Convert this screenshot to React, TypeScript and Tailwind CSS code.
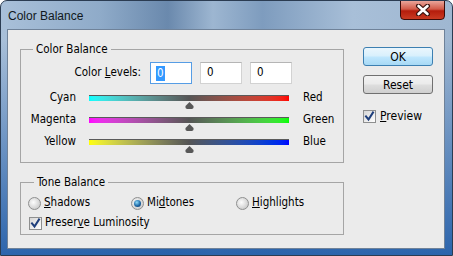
import React from "react";

const ui = "font-['DejaVu_Sans_Condensed','Liberation_Sans',sans-serif] text-[11.5px] text-black";

const Check = () => (
  <span className="w-[13px] h-[13px] border border-[#8e8f8f] bg-gradient-to-br from-[#d6d6d6] to-white flex items-center justify-center">
    <svg width="11" height="11" viewBox="0 0 11 11">
      <path d="M2 5.5 L4.5 8.5 L9 1.5" fill="none" stroke="#1f3f7c" strokeWidth="2" strokeLinecap="square" />
    </svg>
  </span>
);

const Radio = ({ on }: { on?: boolean }) => (
  <span className="w-[13px] h-[13px] rounded-full border border-[#8e8f8f] bg-[radial-gradient(circle_at_40%_40%,#fdfdfd,#d0d0d0_70%,#b8b8b8)] flex items-center justify-center">
    {on && (
      <span className="w-[7px] h-[7px] rounded-full bg-[radial-gradient(circle_at_40%_35%,#8fdcfb,#1d68a6_55%,#0b2f5c)]" />
    )}
  </span>
);

const Slider = ({ left, right, grad }: { left: string; right: string; grad: string }) => (
  <div className="flex items-center h-[22px]">
    <span className="w-[55px] text-right">{left}</span>
    <div className={`ml-[13px] w-[200px] h-[6px] relative border-t border-[#5a5a5a] ${grad}`}>
      <svg className="absolute top-[6px] left-[96px]" width="9" height="7" viewBox="0 0 9 7">
        <path d="M4.5 0 L8.5 4 Q9 7 6.5 7 L2.5 7 Q0 7 0.5 4 Z" fill="#585858" />
      </svg>
    </div>
    <span className="ml-[14px]">{right}</span>
  </div>
);

const Field = ({ focus }: { focus?: boolean }) => (
  <div
    className={`w-[42px] h-[22px] bg-white border flex items-center pl-[5px] ${
      focus ? "border-[#569de5]" : "border-[#d2d2d2] border-t-[#b5b5b5]"
    }`}
  >
    {focus ? <span className="bg-[#3399ff] text-white leading-[15px] px-px">0</span> : <span className="px-px">0</span>}
  </div>
);

export default function App() {
  return (
    <div className={`w-[453px] h-[256px] flex flex-col rounded-t-[7px] border border-[#2b3c52] overflow-hidden bg-[linear-gradient(180deg,rgba(38,96,170,0)_15%,rgba(38,96,170,0.95)_100%),linear-gradient(90deg,#a9c0d9_0%,#8fabc9_22%,#6a89ad_37%,#9db6d1_47%,#7e9cbe_58%,#a8bfd8_78%,#9fb7d1_100%)] ${ui}`}>
      <div className="h-[28px] flex justify-between shrink-0">
        <span className="ml-[7px] mt-[6px] text-[12px] font-['Liberation_Sans',sans-serif] text-[#101820]">Color Balance</span>
        <div className="-mt-px mr-[7px] w-[45px] h-[20px] rounded-b-[4px] border border-[#3b0b08] bg-[linear-gradient(180deg,#e9a59a_0%,#d25a48_45%,#b41d0c_55%,#c93a22_100%)] flex items-center justify-center">
          <svg width="16" height="12" viewBox="0 0 16 12">
            <path d="M3.5 2 L12.5 10 M12.5 2 L3.5 10" stroke="#3a1410" strokeWidth="5" strokeLinecap="round" />
            <path d="M3.5 2 L12.5 10 M12.5 2 L3.5 10" stroke="#ffffff" strokeWidth="2.6" strokeLinecap="round" />
          </svg>
        </div>
      </div>

      <div className="ml-[6px] mr-[7px] mb-[6px] flex-1 bg-[#ebebeb] border border-[#6f8299] flex pl-[12px]">
        <div className="w-[324px] flex flex-col pt-[12px]">
          <fieldset className="border border-[#a5a5a5] pb-[9px]">
            <legend className="ml-[12px] px-[3px] leading-[14px]">Color Balance</legend>
            <div className="mt-[6px] h-[22px] flex items-center">
              <span className="w-[120px] text-right">
                Color <u>L</u>evels:
              </span>
              <div className="ml-[9px] flex gap-[8px]">
                <Field focus />
                <Field />
                <Field />
              </div>
            </div>
            <div className="mt-[3px]">
              <Slider left="Cyan" right="Red" grad="bg-gradient-to-r from-[#00ffff] via-[#555555] to-[#ff0000]" />
              <Slider left="Magenta" right="Green" grad="bg-gradient-to-r from-[#ff00ff] via-[#555555] to-[#00ff00]" />
              <Slider left="Yellow" right="Blue" grad="bg-gradient-to-r from-[#ffff00] via-[#555555] to-[#0000ff]" />
            </div>
          </fieldset>

          <fieldset className="mt-[12px] border border-[#a5a5a5] pb-[2px]">
            <legend className="ml-[13px] px-[3px] leading-[14px]">Tone Balance</legend>
            <div className="mt-[5px] h-[18px] flex items-center pl-[7px]">
              <div className="w-[103px] flex items-center gap-[3px]">
                <Radio />
                <span>
                  <u>S</u>hadows
                </span>
              </div>
              <div className="w-[105px] flex items-center gap-[3px]">
                <Radio on />
                <span>
                  Mi<u>d</u>tones
                </span>
              </div>
              <div className="flex items-center gap-[3px]">
                <Radio />
                <span>
                  <u>H</u>ighlights
                </span>
              </div>
            </div>
            <div className="mt-[2px] h-[18px] flex items-center gap-[3px] pl-[8px]">
              <Check />
              <span>
                Preser<u>v</u>e Luminosity
              </span>
            </div>
          </fieldset>
        </div>

        <div className="ml-[19px] w-[70px] flex flex-col pt-[17px]">
          <button className="h-[19px] rounded-[3px] border border-[#3c7fb1] bg-[linear-gradient(180deg,#eaf6fd_0%,#d9f0fc_45%,#bee6fd_55%,#a7d9f5_100%)] text-[12px] leading-none">
            OK
          </button>
          <button className="mt-[9px] h-[19px] rounded-[3px] border border-[#707070] bg-[linear-gradient(180deg,#f2f2f2_0%,#ebebeb_45%,#dddddd_55%,#cfcfcf_100%)] text-[12px] leading-none">
            Reset
          </button>
          <div className="mt-[16px] flex items-center gap-[4px]">
            <Check />
            <span className="text-[12px] leading-[13px]">
              <u>P</u>review
            </span>
          </div>
        </div>
      </div>
    </div>
  );
}
